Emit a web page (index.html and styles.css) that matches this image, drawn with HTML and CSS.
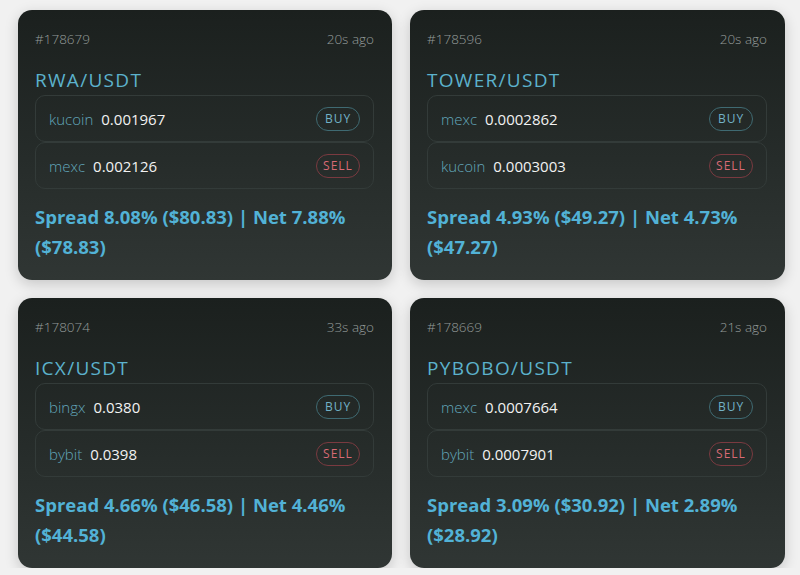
FILE: index.html
```html
<!DOCTYPE html>
<html>
<head>
<meta charset="utf-8">
<link rel="stylesheet" href="styles.css">
</head>
<body>
<div class="grid">
  <div class="card">
    <div class="head"><span>#178679</span><span>20s ago</span></div>
    <div class="pair">RWA/USDT</div>
    <div class="row"><span class="ex">kucoin</span><span class="price">0.001967</span><span class="pill buy">BUY</span></div>
    <div class="row"><span class="ex">mexc</span><span class="price">0.002126</span><span class="pill sell">SELL</span></div>
    <div class="spread">Spread 8.08% ($80.83) | Net 7.88% ($78.83)</div>
  </div>
  <div class="card">
    <div class="head"><span>#178596</span><span>20s ago</span></div>
    <div class="pair">TOWER/USDT</div>
    <div class="row"><span class="ex">mexc</span><span class="price">0.0002862</span><span class="pill buy">BUY</span></div>
    <div class="row"><span class="ex">kucoin</span><span class="price">0.0003003</span><span class="pill sell">SELL</span></div>
    <div class="spread">Spread 4.93% ($49.27) | Net 4.73% ($47.27)</div>
  </div>
  <div class="card">
    <div class="head"><span>#178074</span><span>33s ago</span></div>
    <div class="pair">ICX/USDT</div>
    <div class="row"><span class="ex">bingx</span><span class="price">0.0380</span><span class="pill buy">BUY</span></div>
    <div class="row"><span class="ex">bybit</span><span class="price">0.0398</span><span class="pill sell">SELL</span></div>
    <div class="spread">Spread 4.66% ($46.58) | Net 4.46% ($44.58)</div>
  </div>
  <div class="card">
    <div class="head"><span>#178669</span><span>21s ago</span></div>
    <div class="pair">PYBOBO/USDT</div>
    <div class="row"><span class="ex">mexc</span><span class="price">0.0007664</span><span class="pill buy">BUY</span></div>
    <div class="row"><span class="ex">bybit</span><span class="price">0.0007901</span><span class="pill sell">SELL</span></div>
    <div class="spread">Spread 3.09% ($30.92) | Net 2.89% ($28.92)</div>
  </div>
</div>
</body>
</html>
```
FILE: styles.css
```css
html, body {
  margin: 0;
  padding: 0;
  background: #f1f1f1;
  font-family: "Open Sans", "Noto Sans", sans-serif;
}
.grid {
  display: grid;
  grid-template-columns: 374px 375px;
  column-gap: 18px;
  row-gap: 18px;
  padding: 10px 0 0 18px;
}
.card {
  height: 270px;
  box-sizing: border-box;
  padding: 20px 18px 18px 17px;
  border-radius: 14px;
  background: linear-gradient(180deg, #1b201e 0%, #262c2a 55%, #303634 100%);
  box-shadow: 0 4px 14px rgba(0,0,0,0.18);
  display: flex;
  flex-direction: column;
}
.head {
  display: flex;
  justify-content: space-between;
  font-size: 13.5px;
  font-weight: 300;
  line-height: 18px;
  color: #959c9a;
}
.pair {
  margin-top: 20px;
  margin-bottom: 3px;
  font-size: 19px;
  line-height: 24px;
  letter-spacing: 1.3px;
  color: #5cb2cc;
}
.row {
  height: 47px;
  box-sizing: border-box;
  border: 1px solid #333b39;
  border-radius: 10px;
  display: flex;
  align-items: center;
  padding: 0 13px;
  font-size: 15px;
}
.ex {
  color: #62a6ba;
  font-weight: 300;
  margin-right: 8px;
}
.price {
  color: #f2f2f2;
  flex: 1;
}
.pill {
  width: 44px;
  height: 24px;
  box-sizing: border-box;
  border-radius: 12px;
  display: flex;
  align-items: center;
  justify-content: center;
  font-size: 12px;
  letter-spacing: 1px;
}
.buy {
  border: 1px solid #3f6a72;
  color: #72b2c6;
}
.sell {
  border: 1px solid #7a3a40;
  color: #d86a74;
}
.spread {
  margin-top: 13px;
  font-size: 18.5px;
  line-height: 30px;
  font-weight: 700;
  color: #52b2d6;
}
```
